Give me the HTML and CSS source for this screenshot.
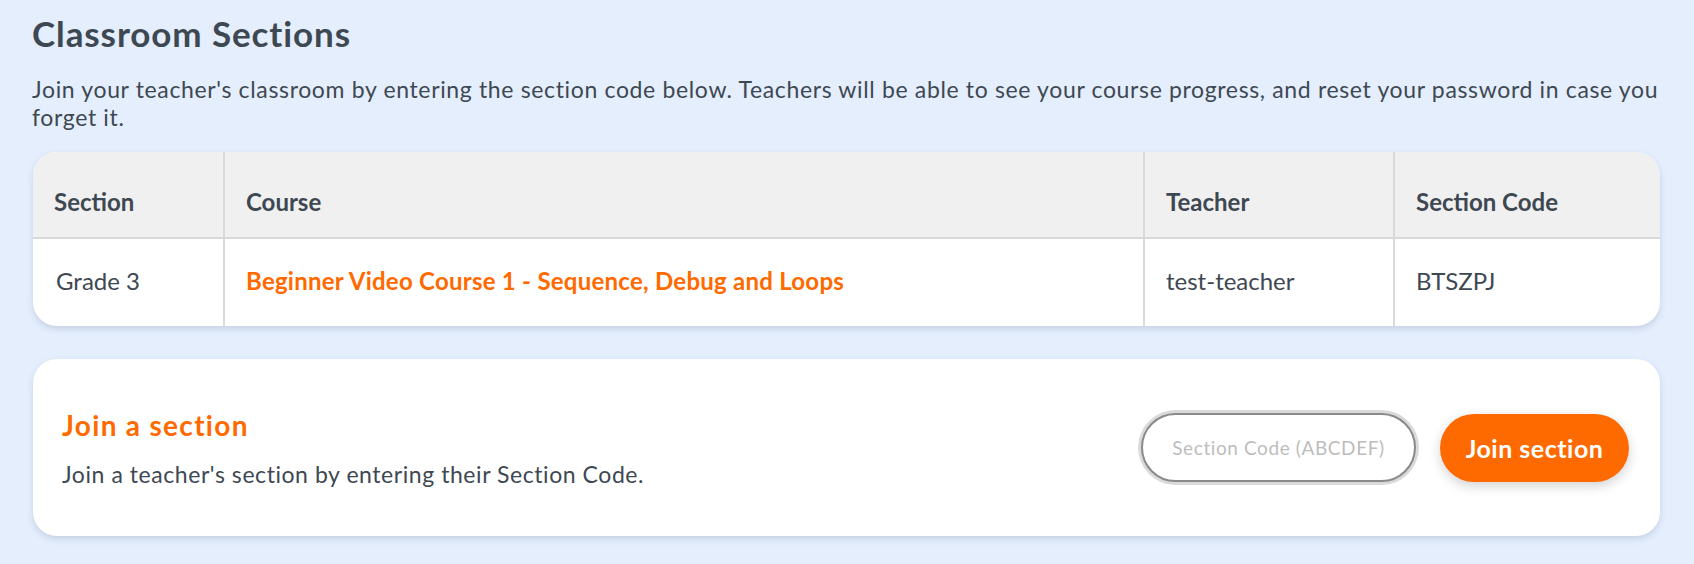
FILE: index.html
```html
<!DOCTYPE html>
<html lang="en">
<head>
<meta charset="utf-8">
<title>Classroom Sections</title>
<link rel="stylesheet" href="styles.css">
</head>
<body>
<main class="page">
  <h1 class="title">Classroom Sections</h1>
  <p class="intro">Join your teacher's classroom by entering the section code below. Teachers will be able to see your course progress, and reset your password in case you forget it.</p>

  <section class="table-card">
    <div class="row head">
      <div class="cell">Section</div>
      <div class="cell">Course</div>
      <div class="cell">Teacher</div>
      <div class="cell">Section Code</div>
    </div>
    <div class="row body">
      <div class="cell">Grade 3</div>
      <div class="cell"><a class="course-link" href="#">Beginner Video Course 1 - Sequence, Debug and Loops</a></div>
      <div class="cell">test-teacher</div>
      <div class="cell">BTSZPJ</div>
    </div>
  </section>

  <section class="join-card">
    <div class="join-text">
      <h2 class="join-title">Join a section</h2>
      <p class="join-desc">Join a teacher's section by entering their Section Code.</p>
    </div>
    <form class="join-form" onsubmit="return false;">
      <input class="code-input" type="text" placeholder="Section Code (ABCDEF)">
      <button class="join-btn" type="submit">Join section</button>
    </form>
  </section>
</main>
</body>
</html>
```
FILE: styles.css
```css
* { box-sizing: border-box; }
html, body { margin: 0; padding: 0; }
body {
  background: #e4eefd;
  font-family: Lato, "Noto Sans", sans-serif;
  color: #3e4852;
}
.page {
  padding: 12px 34px 20px 33px;
}
.title {
  margin: 0 0 0 -1px;
  font-size: 35px;
  font-weight: 700;
  line-height: 42px;
  letter-spacing: 0.9px;
  color: #3e4852;
}
.intro {
  margin: 21px -8px 21px -1px;
  font-size: 23px;
  line-height: 28px;
  letter-spacing: 0.65px;
  color: #3e4852;
}
.table-card {
  background: #fff;
  border-radius: 24px;
  overflow: hidden;
  box-shadow: 0 3px 6px rgba(90, 110, 140, 0.22);
}
.row {
  display: grid;
  grid-template-columns: 190px 1fr 250px 267px;
}
.row.head {
  background: #f0f0f0;
  height: 87px;
  border-bottom: 2px solid #d9d9d9;
  font-weight: 700;
}
.row.head .cell {
  padding-top: 14px;
}
.row.body {
  height: 87px;
}
.row.body .cell {
  padding-bottom: 5px;
}
.cell {
  display: flex;
  align-items: center;
  padding-left: 21px;
  font-size: 24px;
}
.cell + .cell {
  border-left: 2px solid #d9d9d9;
}
.row.body .cell:first-child { padding-left: 23px; }
.course-link {
  color: #ff6a00;
  font-weight: 700;
  letter-spacing: 0.25px;
  text-decoration: none;
}
.join-card {
  margin-top: 33px;
  background: #fff;
  border-radius: 24px;
  height: 177px;
  padding: 0 31px 0 29px;
  display: flex;
  align-items: center;
  justify-content: space-between;
  box-shadow: 0 3px 6px rgba(90, 110, 140, 0.22);
}
.join-title {
  margin: 0;
  font-size: 28px;
  line-height: 34px;
  font-weight: 700;
  letter-spacing: 1.3px;
  color: #ff6a00;
}
.join-desc {
  margin: 18px 0 0;
  font-size: 23px;
  line-height: 28px;
  letter-spacing: 0.56px;
  color: #3e4852;
}
.join-form {
  display: flex;
  align-items: center;
  gap: 24px;
}
.code-input {
  width: 275px;
  height: 69px;
  border: 2px solid #8a8a8a;
  border-radius: 35px;
  box-shadow: 0 0 0 3px #dadada;
  background: #fff;
  font-family: Lato, "Noto Sans", sans-serif;
  font-size: 19px;
  letter-spacing: 0.6px;
  text-align: center;
  color: #3e4852;
  outline: none;
}
.code-input::placeholder {
  color: #bdbdbd;
}
.join-btn {
  width: 189px;
  height: 68px;
  border: 0;
  border-radius: 34px;
  background: #ff6a00;
  color: #fff;
  font-family: Lato, "Noto Sans", sans-serif;
  font-size: 25px;
  font-weight: 700;
  letter-spacing: 0.5px;
  box-shadow: 0 4px 12px rgba(0, 0, 0, 0.18);
  cursor: pointer;
}
```
